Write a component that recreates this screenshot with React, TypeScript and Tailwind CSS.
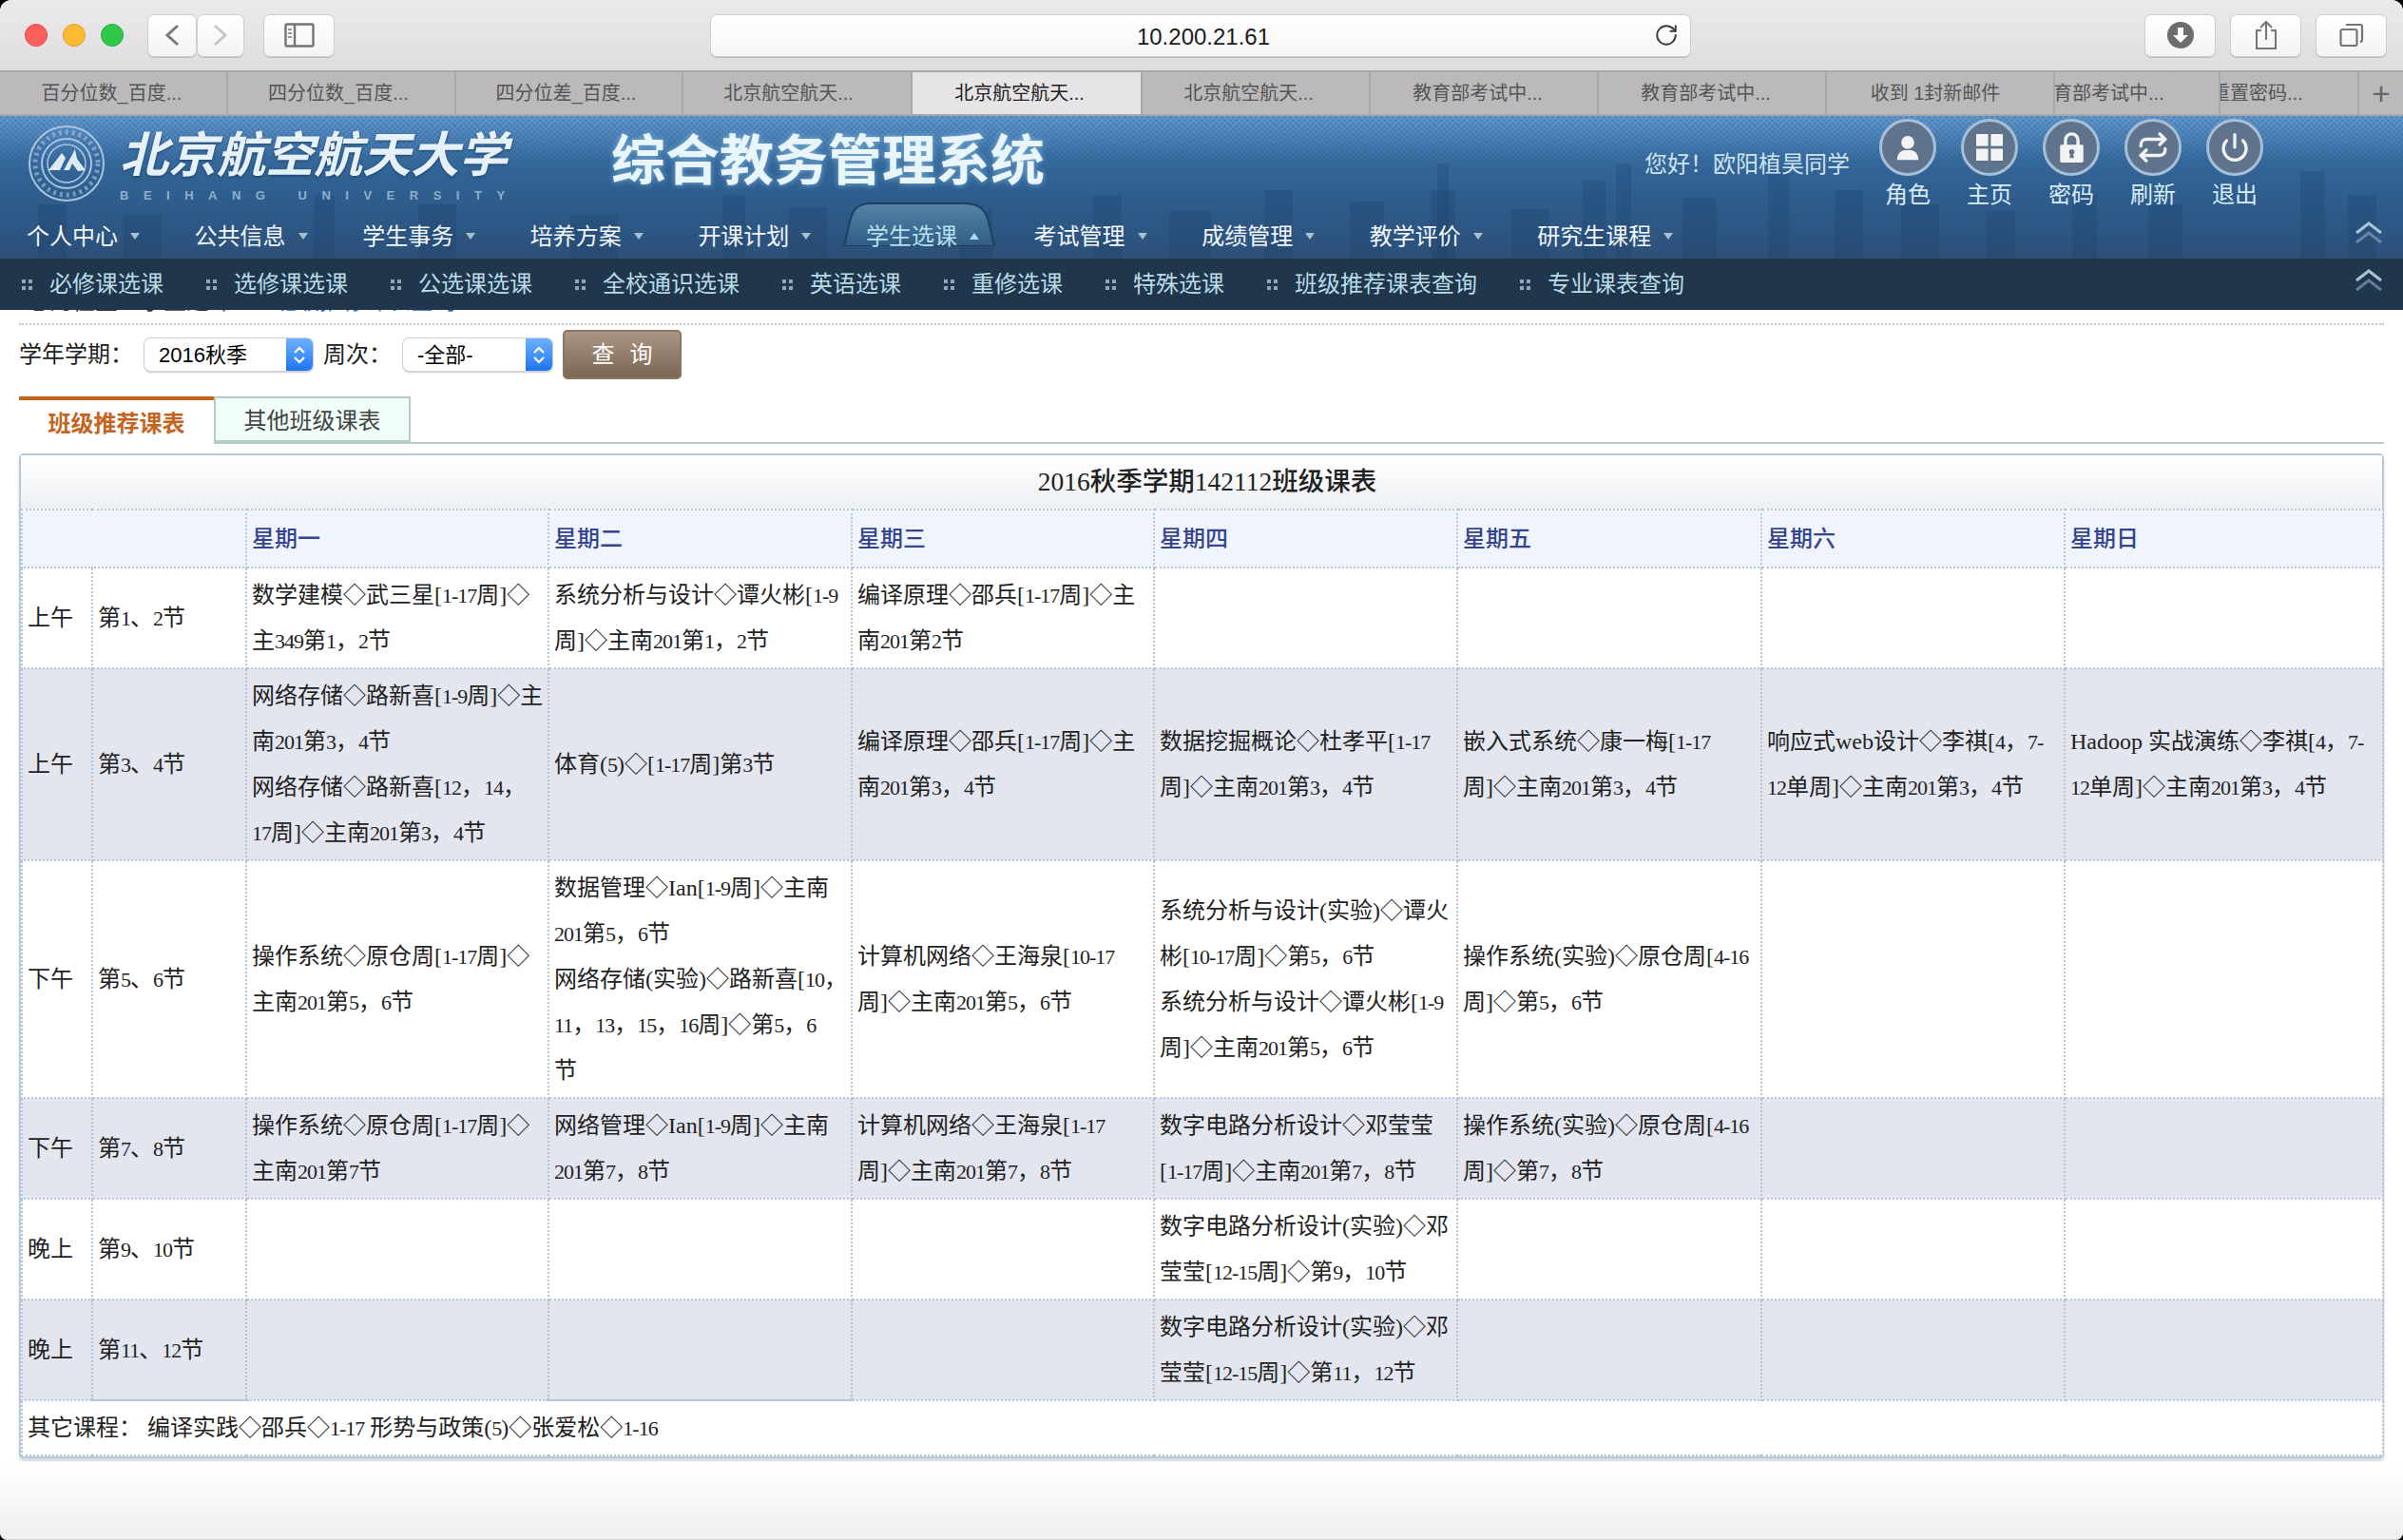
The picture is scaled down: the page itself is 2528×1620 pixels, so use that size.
import { Power, Repeat, RotateCw } from 'lucide-react'

const browserTabs = [
  { label: '百分位数_百度...', w: 'w-[240px] pr-[3px]' },
  { label: '四分位数_百度...', w: 'w-[240px] pr-[6px]' },
  { label: '四分位差_百度...', w: 'w-[239px] pr-[6px]' },
  { label: '北京航空航天...', w: 'w-[241px] pr-[18px]' },
  { label: '北京航空航天...', w: 'w-[242px] pr-[15px]', active: true },
  { label: '北京航空航天...', w: 'w-[240px] pr-[15px]' },
  { label: '教育部考试中...', w: 'w-[240px] pr-[13px]' },
  { label: '教育部考试中...', w: 'w-[240px] pr-[13px]' },
  { label: '收到 1封新邮件', w: 'w-[240px] pr-[10px]' },
]

const navItems = ['个人中心', '公共信息', '学生事务', '培养方案', '开课计划', '学生选课', '考试管理', '成绩管理', '教学评价', '研究生课程']
const subItems = ['必修课选课', '选修课选课', '公选课选课', '全校通识选课', '英语选课', '重修选课', '特殊选课', '班级推荐课表查询', '专业课表查询']
const days = ['星期一', '星期二', '星期三', '星期四', '星期五', '星期六', '星期日']

// each cell is written out line by line, the wraps follow the picture
const rows: { part: string; slot: string; cells: string[][] }[] = [
  {
    part: '上午',
    slot: '第1、2节',
    cells: [
      ['数学建模◇武三星[1-17周]◇', '主349第1，2节'],
      ['系统分析与设计◇谭火彬[1-9', '周]◇主南201第1，2节'],
      ['编译原理◇邵兵[1-17周]◇主', '南201第2节'],
      [],
      [],
      [],
      [],
    ],
  },
  {
    part: '上午',
    slot: '第3、4节',
    cells: [
      ['网络存储◇路新喜[1-9周]◇主', '南201第3，4节', '网络存储◇路新喜[12，14，', '17周]◇主南201第3，4节'],
      ['体育(5)◇[1-17周]第3节'],
      ['编译原理◇邵兵[1-17周]◇主', '南201第3，4节'],
      ['数据挖掘概论◇杜孝平[1-17', '周]◇主南201第3，4节'],
      ['嵌入式系统◇康一梅[1-17', '周]◇主南201第3，4节'],
      ['响应式web设计◇李祺[4，7-', '12单周]◇主南201第3，4节'],
      ['Hadoop 实战演练◇李祺[4，7-', '12单周]◇主南201第3，4节'],
    ],
  },
  {
    part: '下午',
    slot: '第5、6节',
    cells: [
      ['操作系统◇原仓周[1-17周]◇', '主南201第5，6节'],
      ['数据管理◇Ian[1-9周]◇主南', '201第5，6节', '网络存储(实验)◇路新喜[10，', '11，13，15，16周]◇第5，6', '节'],
      ['计算机网络◇王海泉[10-17', '周]◇主南201第5，6节'],
      ['系统分析与设计(实验)◇谭火', '彬[10-17周]◇第5，6节', '系统分析与设计◇谭火彬[1-9', '周]◇主南201第5，6节'],
      ['操作系统(实验)◇原仓周[4-16', '周]◇第5，6节'],
      [],
      [],
    ],
  },
  {
    part: '下午',
    slot: '第7、8节',
    cells: [
      ['操作系统◇原仓周[1-17周]◇', '主南201第7节'],
      ['网络管理◇Ian[1-9周]◇主南', '201第7，8节'],
      ['计算机网络◇王海泉[1-17', '周]◇主南201第7，8节'],
      ['数字电路分析设计◇邓莹莹', '[1-17周]◇主南201第7，8节'],
      ['操作系统(实验)◇原仓周[4-16', '周]◇第7，8节'],
      [],
      [],
    ],
  },
  {
    part: '晚上',
    slot: '第9、10节',
    cells: [[], [], [], ['数字电路分析设计(实验)◇邓', '莹莹[12-15周]◇第9，10节'], [], [], []],
  },
  {
    part: '晚上',
    slot: '第11、12节',
    cells: [[], [], [], ['数字电路分析设计(实验)◇邓', '莹莹[12-15周]◇第11，12节'], [], [], []],
  },
]

// faint city outline behind the banner: x, top, width
const skyline = [
  [40, 215, 30], [130, 225, 40], [330, 205, 22], [440, 215, 40], [600, 225, 50], [760, 205, 24], [830, 218, 40],
  [1010, 222, 34], [1150, 206, 30], [1230, 222, 44], [1330, 200, 30], [1420, 212, 36], [1512, 172, 12], [1505, 200, 26],
  [1590, 220, 40], [1665, 190, 24], [1700, 172, 16], [1770, 208, 36], [1860, 180, 22], [1930, 200, 30], [2000, 215, 40],
  [2090, 222, 30], [2180, 205, 26], [2260, 215, 36], [2420, 180, 26], [2470, 205, 30],
]

// the reference's digits are narrower than Times at this size
function CourseText({ text }: { text: string }) {
  return (
    <>
      {text.split(/([0-9-]+)/).map((part, i) =>
        i % 2 === 1 ? (
          <span key={i} className="text-[22px] leading-none tracking-[-1px]">
            {part}
          </span>
        ) : (
          part
        ),
      )}
    </>
  )
}

function ToolButton({ className, children }: { className: string; children: React.ReactNode }) {
  return (
    <div className={`flex h-[45px] items-center justify-center rounded-[7px] border border-[#cfcdcf] bg-gradient-to-b from-white to-[#f4f3f4] shadow-[0_1px_0_#bdbbbd] ${className}`}>
      {children}
    </div>
  )
}

function Spinner() {
  return (
    <div className="flex h-[34px] w-[28px] flex-col items-center justify-center gap-[3px] rounded-r-[6px] bg-gradient-to-b from-[#6db0ff] to-[#1a74f5]">
      <svg width="14" height="8" viewBox="0 0 14 8" fill="none" stroke="white" strokeWidth="2.2"><path d="M2 7 7 2l5 5" /></svg>
      <svg width="14" height="8" viewBox="0 0 14 8" fill="none" stroke="white" strokeWidth="2.2"><path d="M2 1l5 5 5-5" /></svg>
    </div>
  )
}

function FakeSelect({ value, className }: { value: string; className: string }) {
  return (
    <div className={`flex h-[34px] items-center justify-between rounded-[6px] bg-white pl-[15px] font-['Liberation_Sans','Noto_Sans_CJK_SC',sans-serif] text-[22px] text-black shadow-[0_0_0_1px_#cfcfcf,0_2px_2px_#c9c9c9] ${className}`}>
      <span>{value}</span>
      <Spinner />
    </div>
  )
}

function RoundIcon({ label, children }: { label: string; children: React.ReactNode }) {
  return (
    <div className="flex w-[86px] flex-col items-center">
      <div className="flex h-[60px] w-[60px] items-center justify-center rounded-full border-[3px] border-[#a6bfd6] bg-[#5f748c]">
        {children}
      </div>
      <div className="mt-[5px] text-[24px] leading-[30px] text-[#d9ecf7]">{label}</div>
    </div>
  )
}

function DoubleUp({ className }: { className: string }) {
  return (
    <svg className={className} width="32" height="26" viewBox="0 0 32 26" fill="none" strokeWidth="3">
      <path d="M3 13 16 3l13 10" stroke="#a9c4d8" />
      <path d="M3 23 16 13l13 10" stroke="#7f9db6" strokeOpacity="0.7" />
    </svg>
  )
}

export default function App() {
  return (
    <div lang="zh-CN" className="h-[1620px] w-[2528px] overflow-hidden bg-black font-['Liberation_Serif','Noto_Sans_CJK_SC',serif]">
      <div className="flex h-full flex-col overflow-hidden rounded-t-[12px] rounded-b-[8px] bg-white">
        {/* Safari toolbar */}
        <div className="flex h-[74px] shrink-0 items-center bg-gradient-to-b from-[#ebe9eb] to-[#dfdddf] font-['Liberation_Sans','Noto_Sans_CJK_SC',sans-serif]">
          <div className="ml-[26px] flex gap-[16px]">
            <div className="h-[24px] w-[24px] rounded-full border border-[#e3474a] bg-[#fc5f5b]" />
            <div className="h-[24px] w-[24px] rounded-full border border-[#dfa023] bg-[#fdbb33]" />
            <div className="h-[24px] w-[24px] rounded-full border border-[#25a83a] bg-[#2fc94a]" />
          </div>
          <ToolButton className="ml-[25px] w-[52px]">
            <svg width="18" height="26" viewBox="0 0 18 26" fill="none" stroke="#7a7a7a" strokeWidth="3"><path d="M15 3 4 13l11 10" /></svg>
          </ToolButton>
          <ToolButton className="w-[50px]">
            <svg width="18" height="26" viewBox="0 0 18 26" fill="none" stroke="#c6c6c6" strokeWidth="3"><path d="M3 3l11 10L3 23" /></svg>
          </ToolButton>
          <ToolButton className="ml-[20px] w-[75px]">
            <svg width="32" height="26" viewBox="0 0 32 26" fill="none" stroke="#757575" strokeWidth="2.4">
              <rect x="1.5" y="1.5" width="29" height="23" rx="1.5" />
              <path d="M11 1.5v23" />
              <path d="M4 7h4M4 11h4M4 15h4" strokeWidth="1.6" />
            </svg>
          </ToolButton>
          <div className="ml-[395px] flex h-[45px] w-[1032px] items-center rounded-[7px] border border-[#cfcdcf] bg-gradient-to-b from-white to-[#f7f6f7] shadow-[0_1px_0_#bdbbbd]">
            <span className="flex-1 pl-[44px] pt-[3px] text-center text-[24px] text-[#1c1c1c]">10.200.21.61</span>
            <RotateCw size={26} strokeWidth={1.8} className="mr-[12px] text-[#3c3c3c]" />
          </div>
          <ToolButton className="ml-[477px] w-[75px]">
            <svg width="28" height="28" viewBox="0 0 28 28">
              <circle cx="14" cy="14" r="14" fill="#6d6d6d" />
              <path d="M11 6h6v8h5l-8 8-8-8h5z" fill="white" />
            </svg>
          </ToolButton>
          <ToolButton className="ml-[15px] w-[75px]">
            <svg width="24" height="32" viewBox="0 0 24 32" fill="none" stroke="#757575" strokeWidth="2">
              <path d="M7 11H2v19h20V11h-5" />
              <path d="M12 21V2M6 8l6-6 6 6" />
            </svg>
          </ToolButton>
          <ToolButton className="ml-[15px] w-[75px]">
            <svg width="26" height="26" viewBox="0 0 26 26" fill="none" stroke="#757575" strokeWidth="2.2">
              <rect x="1.5" y="7" width="17" height="17" rx="2" />
              <path d="M7 2h15a2 2 0 0 1 2 2v14a2 2 0 0 1-2 2" />
            </svg>
          </ToolButton>
        </div>

        {/* Safari tabs */}
        <div className="flex h-[48px] shrink-0 border-y-2 border-[#a9a7a9] bg-[#bbb9bb] font-['Liberation_Sans','Noto_Sans_CJK_SC',sans-serif] text-[20px] text-[#555]">
          {browserTabs.map((tab, i) => (
            <div
              key={i}
              className={`flex items-center justify-center border-r-2 border-[#a9a7a9] ${tab.w} ${tab.active ? 'bg-[#e6e4e6] text-[#222]' : ''}`}
            >
              {tab.label}
            </div>
          ))}
          <div className="w-[174px] overflow-hidden whitespace-nowrap border-r-2 border-[#a9a7a9] pt-[7px] [text-indent:-2px]">育部考试中...</div>
          <div className="w-[146px] overflow-hidden whitespace-nowrap border-r-2 border-[#a9a7a9] pt-[7px] [text-indent:-10px]">重置密码...</div>
          <div className="flex flex-1 items-center justify-center text-[34px] font-light leading-none text-[#666]">+</div>
        </div>

        {/* banner and main nav share one background */}
        <div className="relative shrink-0 bg-[linear-gradient(to_bottom,#5089c3_0%,#33679b_30%,#2e5e8e_55%,#2c5079_100%)]">
          <svg className="absolute inset-0" width="2528" height="150" viewBox="0 122 2528 150" fill="#16365f" fillOpacity="0.2">
            {skyline.map(([x, top, w]) => (
              <rect key={`${x}-${top}`} x={x} y={top} width={w} height={272 - top} />
            ))}
          </svg>
          <div className="absolute inset-x-0 top-0 h-[60px] bg-[repeating-conic-gradient(rgba(255,255,255,0.13)_0_25%,transparent_0_50%)] bg-[length:6px_6px] [mask-image:linear-gradient(to_bottom,black,transparent)]" />

          <div className="relative flex h-[100px] items-start">
            <svg className="ml-[29px] mt-[9px]" width="82" height="82" viewBox="0 0 82 82" fill="none" stroke="#a9c5dd">
              <circle cx="41" cy="41" r="39" strokeWidth="2" />
              <circle cx="41" cy="41" r="33" strokeWidth="5" strokeDasharray="3 4" strokeOpacity="0.6" />
              <circle cx="41" cy="41" r="26" strokeWidth="2" />
              <circle cx="41" cy="41" r="20" strokeWidth="1.5" />
              <path d="M22 48 36 30l4 5-6 13zM38 48l12-22 2 10 9 12-8 1-6-8-3 7z" fill="#dfeaf3" stroke="none" />
            </svg>
            <div className="ml-[15px] mt-[12px] flex w-[420px] flex-col">
              <div className="whitespace-nowrap text-[51px] font-bold italic leading-[60px] text-[#e6f0f7] [text-shadow:0_1px_3px_#1d3f66]">北京航空航天大学</div>
              <div className="mt-[4px] whitespace-nowrap font-['Liberation_Sans',sans-serif] text-[13px] font-bold leading-[16px] tracking-[15.5px] text-[#8fb0cb]">BEIHANG UNIVERSITY</div>
            </div>
            <div className="ml-[97px] mt-[15px] whitespace-nowrap text-[57px] font-bold leading-[66px] text-[#e8f5fb] [text-shadow:0_0_6px_#7fb3d8]">综合教务管理系统</div>
            <div className="ml-auto mt-[36px] whitespace-nowrap text-[24px] leading-[30px] text-[#cfe2ef]">您好！欧阳植昊同学</div>
            <div className="ml-[18px] mr-[134px] mt-[3px] flex">
              <RoundIcon label="角色">
                <svg width="24" height="27" viewBox="0 0 30 32" fill="#f3f3f3">
                  <circle cx="15" cy="9" r="8.5" />
                  <path d="M1 32c0-9 5-12 9-13h10c4 1 9 4 9 13z" />
                </svg>
              </RoundIcon>
              <RoundIcon label="主页">
                <svg width="28" height="28" viewBox="0 0 30 30" fill="#f3f3f3">
                  <rect width="13.5" height="13.5" />
                  <rect x="16.5" width="13.5" height="13.5" />
                  <rect y="16.5" width="13.5" height="13.5" />
                  <rect x="16.5" y="16.5" width="13.5" height="13.5" />
                </svg>
              </RoundIcon>
              <RoundIcon label="密码">
                <svg width="25" height="32" viewBox="0 0 26 34">
                  <path d="M6 15V9a7 7 0 0 1 14 0v6" fill="none" stroke="#f3f3f3" strokeWidth="3.6" />
                  <rect y="14" width="26" height="20" rx="1.5" fill="#f3f3f3" />
                  <circle cx="13" cy="22" r="3" fill="#5f748c" />
                  <path d="M11.5 23h3l1 6h-5z" fill="#5f748c" />
                </svg>
              </RoundIcon>
              <RoundIcon label="刷新">
                <Repeat size={34} strokeWidth={2.4} className="text-[#f3f3f3]" />
              </RoundIcon>
              <RoundIcon label="退出">
                <Power size={32} strokeWidth={2.4} className="text-[#f3f3f3]" />
              </RoundIcon>
            </div>
          </div>

          {/* main nav */}
          <div className="relative flex h-[50px] items-center gap-[57.6px] pl-[28px] pt-[3px] text-[24px] text-[#f2f7fb]">
            {navItems.map((item) => {
              const active = item === '学生选课'
              return (
                <div key={item} className={`relative flex items-center gap-[13px] ${active ? 'text-[#b9e0ee]' : ''}`}>
                  {active && (
                    <svg className="absolute -left-[24px] -top-[19px]" width="160" height="47" viewBox="0 0 164 47" preserveAspectRatio="none">
                      <defs>
                        <linearGradient id="activeTab" x1="0" y1="0" x2="0" y2="1">
                          <stop offset="0" stopColor="#5484a8" />
                          <stop offset="1" stopColor="#2f5c84" />
                        </linearGradient>
                      </defs>
                      <path d="M1 47 7 22C10 8 16 2 30 2h100c16 0 24 6 27 20l6 25z" fill="url(#activeTab)" stroke="#1e3e5b" strokeWidth="2" />
                    </svg>
                  )}
                  <span className="relative whitespace-nowrap">{item}</span>
                  {active ? (
                    <span className="relative h-0 w-0 border-x-[5px] border-b-[7px] border-x-transparent border-b-[#a5dcef]" />
                  ) : (
                    <span className="h-0 w-0 border-x-[5px] border-t-[7px] border-x-transparent border-t-[#a9c0d2]" />
                  )}
                </div>
              )
            })}
            <DoubleUp className="absolute right-[20px] top-[10px]" />
          </div>
        </div>

        {/* sub nav */}
        <div className="relative flex h-[54px] shrink-0 items-center gap-[45px] bg-[#20364d] pl-[23px] text-[24px] text-[#b9dbe6]">
          {subItems.map((item) => (
            <div key={item} className="flex items-center gap-[18px]">
              <span className="grid grid-cols-2 gap-[3px]">
                <i className="h-[4px] w-[4px] bg-[#8ea6b8]" />
                <i className="h-[4px] w-[4px] bg-[#8ea6b8]" />
                <i className="h-[4px] w-[4px] bg-[#8ea6b8]" />
                <i className="h-[4px] w-[4px] bg-[#8ea6b8]" />
              </span>
              <span className="whitespace-nowrap">{item}</span>
            </div>
          ))}
          <DoubleUp className="absolute right-[20px] top-[10px]" />
        </div>

        {/* page content */}
        <div className="flex shrink-0 flex-col px-[20px]">
          {/* breadcrumb, scrolled almost out of sight under the nav */}
          <div className="h-[16px] overflow-hidden border-b-2 border-dotted border-[#c4c4c4]">
            <div className="-mt-[24px] flex pl-[8px] text-[24px] leading-[30px] text-[#333]">
              <span className="w-[260px]">您的位置：学生选课</span>
              <span className="text-[#2f6fc0]">班级推荐课表查询</span>
            </div>
          </div>

          <div className="mt-[5px] flex h-[52px] items-center text-[24px] text-[#222]">
            <span className="w-[132px]">学年学期：</span>
            <FakeSelect value="2016秋季" className="w-[177px]" />
            <span className="ml-[11px] w-[84px]">周次：</span>
            <FakeSelect value="-全部-" className="w-[157px]" />
            <div className="ml-[11px] flex h-[52px] w-[125px] items-center justify-center gap-[16px] rounded-[5px] border-2 border-[#8a7562] bg-gradient-to-b from-[#ab9583] to-[#7c6754] text-[24px] text-white">
              <span>查</span>
              <span>询</span>
            </div>
          </div>

          <div className="mt-[18px] flex h-[50px] border-b-2 border-[#b3ccc4] text-[24px]">
            <div className="-mb-[2px] w-[205px] border-t-4 border-[#c0651a] bg-white pt-[9px] text-center font-bold leading-[32px] text-[#c4651f]">班级推荐课表</div>
            <div className="w-[207px] border-2 border-[#b3ccc4] bg-[#f0fdf8] pt-[9px] text-center leading-[30px] text-[#444]">其他班级课表</div>
          </div>

          {/* timetable */}
          <div className="mt-[10px] w-[2488px] rounded-t-[5px] rounded-b-[4px] border-2 border-[#b8c9dc] shadow-[0_3px_3px_#d5d9de]">
            <div className="flex h-[56px] items-center justify-center bg-gradient-to-b from-white to-[#eceff3] pl-[12px] text-[27.5px] font-medium text-[#222]">
              2016秋季学期142112班级课表
            </div>
            <table className="w-full table-fixed border-collapse text-[24px] leading-[48px] text-[#222]">
              <colgroup>
                <col className="w-[74px]" />
                <col className="w-[162px]" />
                <col className="w-[318px]" />
                <col className="w-[319px]" />
                <col className="w-[318px]" />
                <col className="w-[319px]" />
                <col className="w-[320px]" />
                <col className="w-[319px]" />
                <col className="w-[335px]" />
              </colgroup>
              <thead>
                <tr className="h-[61px] bg-[#f0f4fd]">
                  <th colSpan={2} className="border-2 border-dotted border-[#b4c6da]" />
                  {days.map((day) => (
                    <th key={day} className="border-2 border-dotted border-[#b4c6da] pl-[5px] text-left font-medium text-[#35448f]">
                      {day}
                    </th>
                  ))}
                </tr>
              </thead>
              <tbody>
                {rows.map((row, r) => {
                  const lastRow = r === rows.length - 1
                  return (
                    <tr key={row.slot} className={r % 2 === 1 ? 'bg-[#e3e6ef]' : 'bg-white'}>
                      <td className="border-2 border-dotted border-[#b4c6da] py-[4px] pl-[5px]">{row.part}</td>
                      <td className={`border-2 border-dotted border-[#b4c6da] pl-[5px] ${lastRow ? '[border-bottom-style:solid]' : ''}`}>
                        <CourseText text={row.slot} />
                      </td>
                      {row.cells.map((lines, c) => (
                        <td key={c} className={`border-2 border-dotted border-[#b4c6da] py-[4px] pl-[5px] ${lastRow && c === 1 ? '[border-bottom-style:solid]' : ''}`}>
                          {lines.length === 0 ? (
                            <div className="h-[96px]" />
                          ) : (
                            lines.map((line) => (
                              <div key={line} className="whitespace-nowrap">
                                <CourseText text={line} />
                              </div>
                            ))
                          )}
                        </td>
                      ))}
                    </tr>
                  )
                })}
                <tr className="h-[58px] bg-white">
                  <td colSpan={9} className="border-2 border-dotted border-[#b4c6da] pl-[5px]">
                    <CourseText text={'其它课程：\u00a0编译实践◇邵兵◇1-17 形势与政策(5)◇张爱松◇1-16'} />
                  </td>
                </tr>
              </tbody>
            </table>
          </div>
        </div>

        <div className="mt-[4px] flex-1 border-b border-[#cfcfcf] bg-gradient-to-b from-white to-[#efefef]" />
      </div>
    </div>
  )
}
